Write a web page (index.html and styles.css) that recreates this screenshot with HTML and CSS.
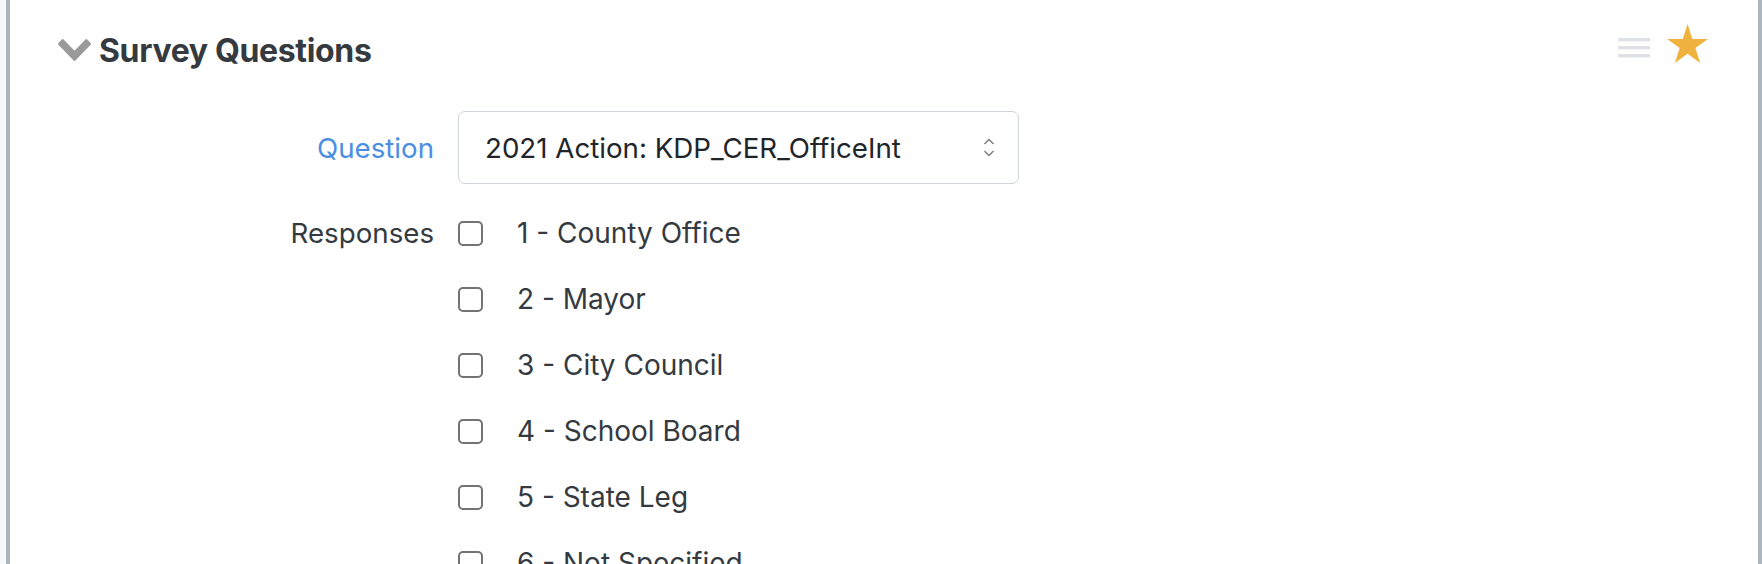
FILE: index.html
```html
<!DOCTYPE html>
<html lang="en">
<head>
<meta charset="utf-8">
<title>Survey Questions</title>
<link rel="stylesheet" href="styles.css">
</head>
<body>
<section class="panel">
  <header class="panel-header">
    <div class="panel-title">
      <svg class="chevron" width="33" height="22" viewBox="90 533 1612 1035" preserveAspectRatio="none" aria-hidden="true">
        <path d="M1683 808l-742 741q-19 19-45 19t-45-19l-742-741q-19-19-19-45.5t19-45.5l166-165q19-19 45-19t45 19l531 531 531-531q19-19 45-19t45 19l166 165q19 19 19 45.5t-19 45.5z" fill="#9a9a9a"/>
      </svg>
      <h2>Survey Questions</h2>
    </div>
    <div class="panel-tools">
      <svg class="handle" width="32" height="20" viewBox="0 0 32 20" aria-hidden="true">
        <rect x="0" y="0" width="32" height="3.4" fill="#dee2e6"/>
        <rect x="0" y="8" width="32" height="3.4" fill="#dee2e6"/>
        <rect x="0" y="16" width="32" height="3.4" fill="#dee2e6"/>
      </svg>
      <svg class="star" width="41" height="39" viewBox="1 0 41.1 39.1" aria-hidden="true">
        <polygon points="21.6,0 26.45,14.93 42.14,14.93 29.45,24.15 34.3,39.07 21.6,29.85 8.9,39.07 13.75,24.15 1.06,14.93 16.75,14.93" fill="#f0b23f"/>
      </svg>
    </div>
  </header>

  <div class="form-row form-row-center">
    <label class="row-label row-label-link" for="question">Question</label>
    <div class="select-box" id="question">
      <span class="select-text">2021 Action: KDP_CER_OfficeInt</span>
      <svg class="select-arrows" width="12" height="21" viewBox="0 0 12 21" aria-hidden="true">
        <polyline points="1.5,7 6,2.5 10.5,7" fill="none" stroke="#7a7a7a" stroke-width="1.4"/>
        <polyline points="1.5,14 6,18.5 10.5,14" fill="none" stroke="#7a7a7a" stroke-width="1.4"/>
      </svg>
    </div>
  </div>

  <div class="form-row form-row-responses">
    <span class="row-label row-label-plain">Responses</span>
    <ul class="response-list">
      <li class="response"><input type="checkbox" id="r1"><label for="r1">1 - County Office</label></li>
      <li class="response"><input type="checkbox" id="r2"><label for="r2">2 - Mayor</label></li>
      <li class="response"><input type="checkbox" id="r3"><label for="r3">3 - City Council</label></li>
      <li class="response"><input type="checkbox" id="r4"><label for="r4">4 - School Board</label></li>
      <li class="response"><input type="checkbox" id="r5"><label for="r5">5 - State Leg</label></li>
      <li class="response"><input type="checkbox" id="r6"><label for="r6">6 - Not Specified</label></li>
    </ul>
  </div>
</section>
</body>
</html>
```

FILE: styles.css
```css
* {
  box-sizing: border-box;
}

html, body {
  margin: 0;
  padding: 0;
}

body {
  background: #f8f9fa;
  font-family: Inter, "Noto Sans", "Liberation Sans", sans-serif;
  color: #343a40;
  overflow: hidden;
}

.panel {
  margin-left: 6px;
  min-height: 100vh;
  background: #ffffff;
  border-left: 4px solid #adb5bd;
  border-right: 4px solid #adb5bd;
  padding: 24px 50px 0 48px;
}

.panel-header {
  display: flex;
  justify-content: space-between;
  align-items: flex-start;
  height: 52px;
}

.panel-title {
  display: flex;
  align-items: center;
  gap: 8px;
  height: 52px;
}

.chevron {
  display: block;
  margin-top: 0;
}

.panel-title h2 {
  margin: 0;
  font-size: 32px;
  font-weight: 700;
  color: #343a40;
  letter-spacing: -0.34px;
}

.panel-tools {
  display: flex;
  align-items: flex-start;
  gap: 17px;
}

.handle {
  display: block;
  margin-top: 14px;
}

.star {
  display: block;
}

.form-row {
  display: grid;
  grid-template-columns: 376px 1fr;
  column-gap: 24px;
}

.form-row-center {
  align-items: center;
  margin-top: 35px;
}

.form-row-responses {
  align-items: start;
  margin-top: 16px;
}

.row-label {
  text-align: right;
  font-size: 27.7px;
}

.row-label-link {
  color: #4a8fe3;
}

.row-label-plain {
  color: #343a40;
  line-height: 66px;
}

.select-box {
  width: 561px;
  height: 73px;
  border: 1px solid #ced4da;
  border-radius: 7px;
  display: flex;
  align-items: center;
  justify-content: space-between;
  padding: 0 23px 0 26px;
  background: #fff;
}

.select-text {
  font-size: 27.7px;
  color: #212529;
}

.select-arrows {
  display: block;
}

.response-list {
  list-style: none;
  margin: 0;
  padding: 0;
}

.response {
  display: flex;
  align-items: center;
  height: 66px;
  gap: 34px;
}

.response input {
  appearance: none;
  -webkit-appearance: none;
  width: 25px;
  height: 25px;
  margin: 0;
  border: 2px solid #737373;
  border-radius: 5px;
  background: #fff;
  flex: none;
}

.response label {
  font-size: 28px;
  color: #343a40;
}
```
